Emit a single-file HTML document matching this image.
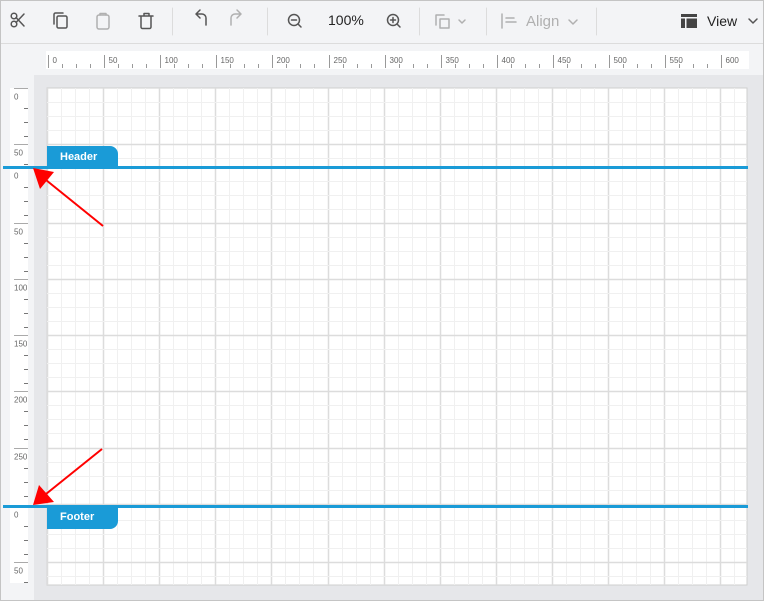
<!DOCTYPE html>
<html><head><style>
*{margin:0;padding:0;box-sizing:border-box}
body{width:764px;height:601px;overflow:hidden;background:#f3f4f6;font-family:"Liberation Sans",sans-serif;position:relative}
.abs{position:absolute}
</style></head><body>
<div class="abs" style="left:0;top:0;width:764px;height:601px;border:1px solid #c4c4c4;z-index:20;pointer-events:none"></div>
<div class="abs" style="left:0;top:0;width:764px;height:44px;background:#f3f4f6;border-bottom:1px solid #dcdcdc"></div>
<svg class="abs" style="left:0;top:0" width="764" height="44" fill="none" stroke-linecap="round" stroke-linejoin="round">
 <g stroke="#555" stroke-width="1.5">
  <circle cx="14" cy="24" r="2.8"/><circle cx="14" cy="16" r="2.8"/><path d="M16 22.5 L24 14 M16 17.5 L24 26"/>
  <rect x="57" y="16" width="10" height="12" rx="1.5"/><path d="M54 24 V14.5 a1.5 1.5 0 0 1 1.5-1.5 H63"/>
  <path d="M139 16 h14 M141 16 v11 a1.5 1.5 0 0 0 1.5 1.5 h7 a1.5 1.5 0 0 0 1.5-1.5 v-11 M144 16 v-2.5 h5 v2.5"/>
  <path d="M200 18 l-4 -4 l4 -4 M196 14 h6 a4 4 0 0 1 4 4 v7"/>
  <circle cx="294" cy="20" r="5.5"/><path d="M298 24 l3 3 M291.5 20 h5"/>
  <circle cx="393" cy="20" r="5.5"/><path d="M397 24 l3 3 M390.5 20 h5 M393 17.5 v5"/>
 </g>
 <g stroke="#b0b0b0" stroke-width="1.5">
  <rect x="97" y="15" width="12" height="14" rx="2"/><path d="M100 15 v-1.5 h6 v1.5"/>
  <path d="M237 18 l4 -4 l-4 -4 M241 14 h-6 a4 4 0 0 0 -4 4 v7"/>
  <path d="M436 25 v-10 h8 M440 19 h9 v9 h-9 z"/><path d="M459 20 l3 3 l3 -3"/>
  <path d="M502 14 v14 M506 18 h8 M506 22 h10"/><path d="M569 20 l4 4 l4 -4"/>
 </g>
 <path d="M749 19 l4 4 l4 -4" stroke="#555" stroke-width="1.5"/>
 <rect x="681" y="14" width="16" height="14" fill="#444"/><rect x="681" y="17" width="16" height="1.5" fill="#f3f4f6"/><rect x="685" y="18" width="1.5" height="10" fill="#f3f4f6"/>
 <g stroke="#dcdcdc"><path d="M172.5 8 v27 M267.5 8 v27 M419.5 8 v27 M486.5 8 v27 M596.5 8 v27"/></g>
 <text x="328" y="25" font-size="14" fill="#222" stroke="none" font-family="Liberation Sans">100%</text>
 <text x="526" y="26" font-size="15" fill="#b0b0b0" stroke="none" font-family="Liberation Sans">Align</text>
 <text x="707" y="26" font-size="14" fill="#222" stroke="none" font-family="Liberation Sans">View</text>
</svg>
<div class="abs" style="left:34px;top:75px;width:730px;height:526px;background:#e6e7ea"></div>
<svg class="abs" style="left:46px;top:51px" width="703" height="18">
 <rect width="703" height="18" fill="#fff"/>
 <g id="hr"></g>
</svg>
<div class="abs" style="left:10px;top:88px;width:18px;height:495px;background:#fff"></div>
<svg class="abs" style="left:0;top:0" width="764" height="601" id="main"></svg>
<script>
var ns="http://www.w3.org/2000/svg";
function el(p,t,a,txt){var e=document.createElementNS(ns,t);for(var k in a)e.setAttribute(k,a[k]);if(txt)e.textContent=txt;p.appendChild(e);return e}
var hr=document.getElementById('hr');
var S=56.1/4;
for(var i=0;i<=48;i++){var x=Math.round(2+i*S)+0.5;if(x>702)break;
 if(i%4==0){el(hr,'line',{x1:x,y1:4,x2:x,y2:17,stroke:'#999'});el(hr,'text',{x:x+4,y:12,'font-size':8,fill:'#666','font-family':'Liberation Sans'},String(i*12.5));}
 else el(hr,'line',{x1:x,y1:13,x2:x,y2:17,stroke:'#999'});}
var m=document.getElementById('main');
el(m,'rect',{x:47,y:88,width:700,height:497,fill:'#fff',stroke:'#cfcfcf'});
function grid(y0,y1){
 for(var k=0;;k++){var x=Math.round(47+k*S)+0.5;if(x>747)break;var maj=k%4==0;el(m,'line',{x1:x,y1:y0,x2:x,y2:y1,stroke:maj?'#dcdcdc':'#f0f0f0','stroke-width':maj?1.5:1});}
 for(var k=1;;k++){var y=Math.round(y0+k*S)+0.5;if(y>=y1)break;var maj=k%4==0;el(m,'line',{x1:47,y1:y,x2:747,y2:y,stroke:maj?'#dcdcdc':'#f0f0f0','stroke-width':maj?1.5:1});}
}
grid(88,167);grid(167,506);grid(506,585);
function vr(y0,y1){
 for(var k=0;;k++){var y=Math.round(y0+k*S)+0.5;if(y>=y1-3)break;
  if(k%4==0){el(m,'line',{x1:14,y1:y,x2:28,y2:y,stroke:'#aaa'});el(m,'text',{x:14,y:y+11,'font-size':8,fill:'#666','font-family':'Liberation Sans'},String(k*12.5));}
  else el(m,'line',{x1:24,y1:y+6,x2:28,y2:y+6,stroke:'#777'});}
}
vr(88,167);vr(167,506);vr(506,583);
el(m,'line',{x1:3,y1:167.5,x2:748,y2:167.5,stroke:'#1a9bd7','stroke-width':3});
el(m,'line',{x1:3,y1:506.5,x2:748,y2:506.5,stroke:'#1a9bd7','stroke-width':3});
el(m,'path',{d:'M47 146 H110 a8 8 0 0 1 8 8 V167 H47 Z',fill:'#1a9bd7'});
el(m,'path',{d:'M47 507 H118 V521 a8 8 0 0 1 -8 8 H47 Z',fill:'#1a9bd7'});
el(m,'text',{x:60,y:160,'font-size':11,fill:'#fff','font-family':'Liberation Sans','font-weight':'bold'},'Header');
el(m,'text',{x:60,y:520,'font-size':11,fill:'#fff','font-family':'Liberation Sans','font-weight':'bold'},'Footer');
el(m,'line',{x1:103,y1:226,x2:46,y2:180,stroke:'#f00','stroke-width':2});
el(m,'path',{d:'M33 168 L54 172 L40 189 Z',fill:'#f00'});
el(m,'line',{x1:102,y1:449,x2:46,y2:494,stroke:'#f00','stroke-width':2});
el(m,'path',{d:'M33 505 L39 485 L54 502 Z',fill:'#f00'});
</script>
</body></html>
